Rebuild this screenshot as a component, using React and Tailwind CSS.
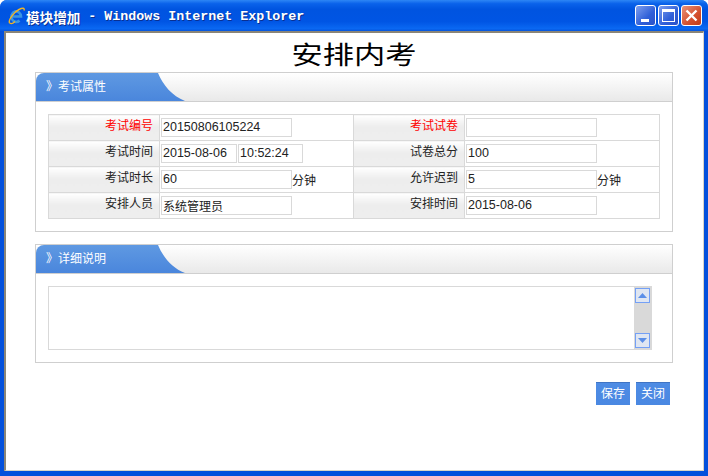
import React from "react";

const cjk = "font-['Noto_Sans_CJK_SC','Liberation_Sans',sans-serif]";

const SectionHeader = ({ title }) => (
  <div className="flex h-[29px] border-b border-[#cfcfcf] bg-gradient-to-b from-white to-[#e9e9e9]">
    <div className="flex w-[122px] items-center rounded-tl-[8px] bg-gradient-to-b from-[#5f99e2] to-[#4a86dc] pb-[2px] pl-[10px] text-[12px] text-white">
      <span className="w-[12px]">》</span>
      <span>{title}</span>
    </div>
    <svg width="28" height="28" viewBox="0 0 28 28" className="-ml-px">
      <defs>
        <linearGradient id="tabfill" x1="0" y1="0" x2="0" y2="1">
          <stop offset="0" stopColor="#5f99e2" />
          <stop offset="1" stopColor="#4a86dc" />
        </linearGradient>
      </defs>
      <path d="M0 0 L1 0 C6 12 15 23 28 28 L0 28 Z" fill="url(#tabfill)" />
    </svg>
  </div>
);

const Field = ({ width = "w-[131px]", children, className = "" }) => (
  <div className={`flex h-[19px] items-center border border-[#d9d9d9] bg-white pl-[1px] font-['Liberation_Sans',sans-serif] text-[12.5px] text-[#222] ${width} ${className}`}>
    {children}
  </div>
);

const Label = ({ children, red }) => (
  <td className={`h-[26px] border border-[#d9d9d9] bg-[linear-gradient(180deg,#ffffff_0%,#ededed_45%,#eeeeee_100%)] pb-[5px] pr-[6px] text-right text-[12px] ${red ? "text-[#f00]" : "text-[#222]"}`}>
    {children}
  </td>
);

const Value = ({ children }) => (
  <td className="border border-[#d9d9d9] pl-[1px]">
    <div className="flex items-center text-[12px] text-[#222]">{children}</div>
  </td>
);

const WinButton = ({ className = "", children }) => (
  <div className={`flex h-[21px] w-[21px] items-center justify-center rounded-[3px] border border-white ${className}`}>
    {children}
  </div>
);

const ScrollArrow = ({ up }) => (
  <div className="flex h-[15px] w-[15px] items-center justify-center border border-[#74a0f5] bg-[#dfe6f2]">
    <svg width="9" height="5" viewBox="0 0 9 5">
      <path d={up ? "M4.5 0 L9 5 L0 5 Z" : "M0 0 L9 0 L4.5 5 Z"} fill="#5b8fe8" />
    </svg>
  </div>
);

const ActionButton = ({ children }) => (
  <button className="h-[23px] w-[34px] border-t border-[#3f74c4] bg-gradient-to-b from-[#4e8ce4] to-[#4a88e2] pb-[2px] text-[12px] text-white">
    {children}
  </button>
);

export default function App() {
  return (
    <div className={`flex h-[476px] w-[708px] flex-col overflow-hidden rounded-t-[7px] bg-[#0350dc] ${cjk}`}>
      {/* title bar */}
      <div className="flex h-[31px] shrink-0 items-center bg-[linear-gradient(180deg,#2d86f5_0%,#0a62ea_12%,#0054e0_30%,#0055e4_70%,#0a68f2_92%,#0555dd_100%)] pl-[7px] pr-[6px]">
        <svg width="19" height="19" viewBox="0 0 19 19">
          <path d="M5.5 10.5 H14 A4.8 5.3 0 1 0 12.5 14.5" fill="none" stroke="#3a95e2" strokeWidth="2.6" />
          <path d="M2.5 17 C1 14 7 6 12 3.5 C15 2 18 1.5 17 4.5" fill="none" stroke="#f0b428" strokeWidth="1.4" />
          <path d="M2.5 17 C4 18 6.5 17 8 15.5" fill="none" stroke="#f0b428" strokeWidth="1.2" />
        </svg>
        <div className="flex items-center whitespace-nowrap pt-[3px] text-[13.6px] font-bold text-white [text-shadow:1px_1px_0_#0a2f90]">
          <span>模块增加</span>
          <span className="font-['Liberation_Mono',monospace] text-[13.33px]">&nbsp;- Windows Internet Explorer</span>
        </div>
        <div className="ml-auto flex gap-[2px]">
          <WinButton className="bg-[linear-gradient(135deg,#7f9fee,#2f5fd8_60%,#2a52c8)]">
            <div className="mt-[9px] -ml-[2px] h-[3px] w-[8px] bg-white" />
          </WinButton>
          <WinButton className="bg-[linear-gradient(135deg,#7f9fee,#2f5fd8_60%,#2a52c8)]">
            <div className="h-[13px] w-[13px] border border-t-[3px] border-white" />
          </WinButton>
          <WinButton className="bg-[linear-gradient(135deg,#e8927a,#d4502e_60%,#c23c18)]">
            <svg width="13" height="13" viewBox="0 0 13 13">
              <path d="M1.5 1.5 L11.5 11.5 M11.5 1.5 L1.5 11.5" stroke="#fff" strokeWidth="2.4" />
            </svg>
          </WinButton>
        </div>
      </div>

      {/* page */}
      <div className="mx-[4px] mb-[5px] flex-1 border-l-2 border-t-2 border-r border-b border-l-[#8a8578] border-t-[#8a8578] border-r-[#d8d4c8] border-b-[#d8d4c8] bg-white pl-[29px] pr-[30px]">
        <div className="flex h-[39px] items-center justify-center pt-[3px] text-[25px] font-normal text-black">
          <span className="scale-x-[1.25]">安排内考</span>
        </div>

        <div className="h-[160px] border border-[#cfcfcf]">
          <SectionHeader title="考试属性" />
          <div className="px-[12px] pt-[12px]">
            <table className="w-[611px] table-fixed border-collapse">
              <colgroup>
                <col className="w-[111px]" />
                <col className="w-[194px]" />
                <col className="w-[111px]" />
                <col className="w-[195px]" />
              </colgroup>
              <tbody>
                <tr>
                  <Label red>考试编号</Label>
                  <Value><Field>20150806105224</Field></Value>
                  <Label red>考试试卷</Label>
                  <Value><Field /></Value>
                </tr>
                <tr>
                  <Label>考试时间</Label>
                  <Value>
                    <Field width="w-[76px]">2015-08-06</Field>
                    <Field width="w-[65px]" className="ml-[1px]">10:52:24</Field>
                  </Value>
                  <Label>试卷总分</Label>
                  <Value><Field>100</Field></Value>
                </tr>
                <tr>
                  <Label>考试时长</Label>
                  <Value><Field>60</Field>分钟</Value>
                  <Label>允许迟到</Label>
                  <Value><Field>5</Field>分钟</Value>
                </tr>
                <tr>
                  <Label>安排人员</Label>
                  <Value><Field className={`${cjk} !text-[12px]`}>系统管理员</Field></Value>
                  <Label>安排时间</Label>
                  <Value><Field>2015-08-06</Field></Value>
                </tr>
              </tbody>
            </table>
          </div>
        </div>

        <div className="mt-[12px] h-[119px] border border-[#cfcfcf]">
          <SectionHeader title="详细说明" />
          <div className="px-[12px] pt-[12px]">
            <div className="flex h-[64px] w-[604px] border border-[#d9d9d9]">
              <div className="flex-1" />
              <div className="flex w-[17px] flex-col justify-between bg-[#d9d9d9] px-px py-[1px]">
                <ScrollArrow up />
                <ScrollArrow />
              </div>
            </div>
          </div>
        </div>

        <div className="mt-[19px] flex justify-end gap-[6px] pr-[3px]">
          <ActionButton>保存</ActionButton>
          <ActionButton>关闭</ActionButton>
        </div>
      </div>
    </div>
  );
}
